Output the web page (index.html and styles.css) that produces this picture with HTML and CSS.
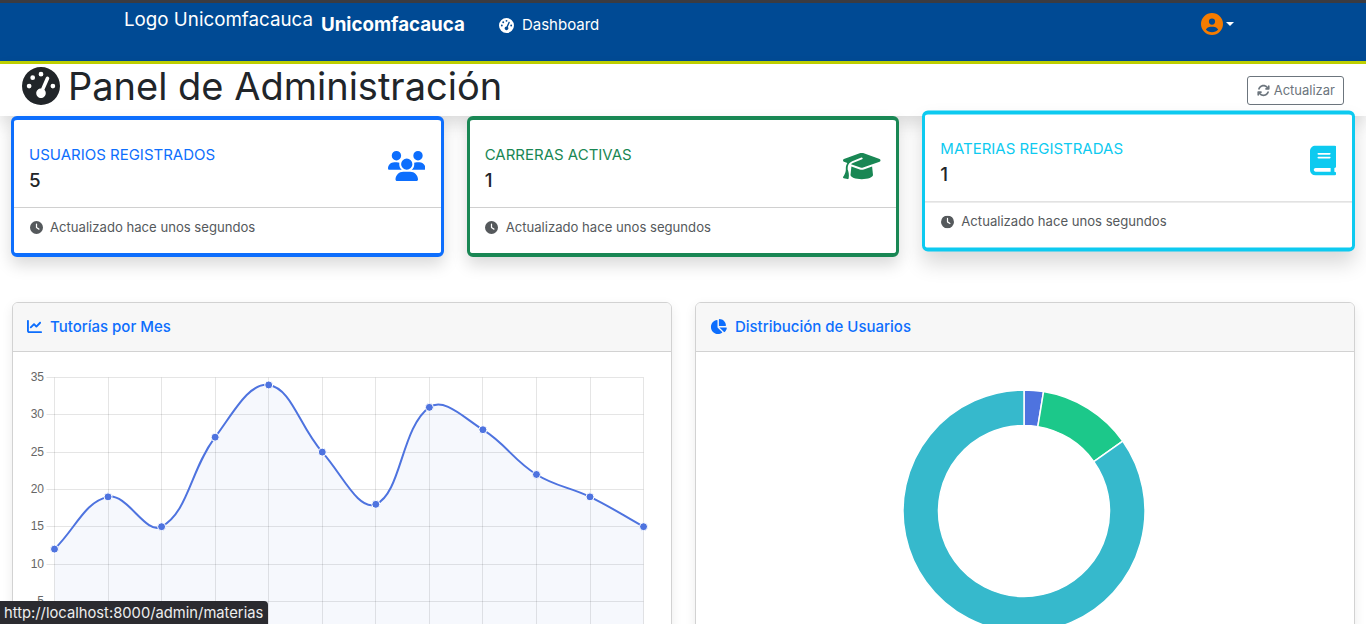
FILE: index.html
```html
<!DOCTYPE html>
<html lang="es">
<head>
    <meta charset="UTF-8">
    <meta name="viewport" content="width=device-width, initial-scale=1.0">
    <title>Panel de Administración</title>
    <link rel="stylesheet" href="styles.css">
</head>
<body>
    <svg class="icon-defs" aria-hidden="true">
        <symbol id="i-gauge" viewBox="0 0 512 512"><path d="M0 256a256 256 0 1 1 512 0A256 256 0 1 1 0 256zM288 96a32 32 0 1 0 -64 0 32 32 0 1 0 64 0zM256 416c35.3 0 64-28.7 64-64c0-17.4-6.9-33.1-18.1-44.6L366 161.7c5.3-12.1-.2-26.3-12.3-31.6s-26.3 .2-31.6 12.3L257.9 288c-.6 0-1.3 0-1.9 0c-35.3 0-64 28.7-64 64s28.7 64 64 64zM176 144a32 32 0 1 0 -64 0 32 32 0 1 0 64 0zM96 288a32 32 0 1 0 0-64 32 32 0 1 0 0 64zm352-32a32 32 0 1 0 -64 0 32 32 0 1 0 64 0z"/></symbol>
        <symbol id="i-clock" viewBox="0 0 512 512"><path d="M256 0a256 256 0 1 1 0 512A256 256 0 1 1 256 0zM232 120V256c0 8 4 15.5 10.7 20l96 64c11 7.4 25.9 4.4 33.3-6.7s4.4-25.9-6.7-33.3L280 243.2V120c0-13.3-10.7-24-24-24s-24 10.7-24 24z"/></symbol>
    </svg>

    <nav class="navbar">
        <span class="nav-logo">Logo Unicomfacauca</span>
        <a class="nav-brand" href="#">Unicomfacauca</a>
        <a class="nav-link" href="#">
            <svg class="nav-link-icon"><use href="#i-gauge"/></svg>
            Dashboard
        </a>
        <a class="nav-user" href="#">
            <svg class="nav-user-icon" viewBox="0 0 512 512"><path d="M399 384.2C376.9 345.8 335.4 320 288 320H224c-47.4 0-88.9 25.8-111 64.2c35.2 39.2 86.2 63.8 143 63.8s107.8-24.7 143-63.8zM0 256a256 256 0 1 1 512 0A256 256 0 1 1 0 256zm256 16a72 72 0 1 0 0-144 72 72 0 1 0 0 144z"/></svg>
            <span class="caret"></span>
        </a>
    </nav>

    <header class="page-header">
        <h1 class="page-title">
            <svg class="page-title-icon"><use href="#i-gauge"/></svg>
            Panel de Administración
        </h1>
        <button class="btn-refresh">
            <svg class="btn-refresh-icon" viewBox="0 0 512 512"><path d="M105.1 202.6c7.7-21.8 20.2-42.3 37.8-59.8c62.5-62.5 163.8-62.5 226.3 0L386.3 160H352c-17.7 0-32 14.3-32 32s14.3 32 32 32H463.5c0 0 0 0 0 0h.4c17.7 0 32-14.3 32-32V80c0-17.7-14.3-32-32-32s-32 14.3-32 32v35.2L414.4 97.6c-87.5-87.5-229.3-87.5-316.8 0C73.2 122 55.6 150.7 44.8 181.4c-5.9 16.7 2.9 34.9 19.5 40.8s34.9-2.9 40.8-19.5zM39 289.3c-5 1.5-9.8 4.2-13.7 8.2c-4 4-6.7 8.8-8.1 14c-.3 1.2-.6 2.5-.8 3.8c-.3 1.7-.4 3.4-.4 5.1V432c0 17.7 14.3 32 32 32s32-14.3 32-32V396.9l17.6 17.5 0 0c87.5 87.4 229.3 87.4 316.7 0c24.4-24.4 42.1-53.1 52.9-83.7c5.9-16.7-2.9-34.9-19.5-40.8s-34.9 2.9-40.8 19.5c-7.7 21.8-20.2 42.3-37.8 59.8c-62.5 62.5-163.8 62.5-226.3 0l-.1-.1L125.6 352H160c17.7 0 32-14.3 32-32s-14.3-32-32-32H48.4c-1.6 0-3.2 .1-4.8 .3s-3.1 .5-4.6 1z"/></svg>
            Actualizar
        </button>
    </header>

    <section class="stats">
        <div class="stat-card stat-blue">
            <div class="stat-body">
                <div>
                    <div class="stat-label">USUARIOS REGISTRADOS</div>
                    <div class="stat-value">5</div>
                </div>
                <svg class="stat-icon" viewBox="0 0 640 512"><path d="M144 0a80 80 0 1 1 0 160A80 80 0 1 1 144 0zM512 0a80 80 0 1 1 0 160A80 80 0 1 1 512 0zM0 298.7C0 239.8 47.8 192 106.7 192h42.7c15.9 0 31 3.5 44.6 9.7c-1.3 7.2-1.9 14.7-1.9 22.3c0 38.2 16.8 72.5 43.3 96c-.2 0-.4 0-.7 0H21.3C9.6 320 0 310.4 0 298.7zM405.3 320c-.2 0-.4 0-.7 0c26.6-23.5 43.3-57.8 43.3-96c0-7.6-.7-15-1.9-22.3c13.6-6.3 28.7-9.7 44.6-9.7h42.7C592.2 192 640 239.8 640 298.7c0 11.8-9.6 21.3-21.3 21.3H405.3zM224 224a96 96 0 1 1 192 0 96 96 0 1 1 -192 0zM128 485.3C128 411.7 187.7 352 261.3 352H378.7C452.3 352 512 411.7 512 485.3c0 14.7-11.9 26.7-26.7 26.7H154.7c-14.7 0-26.7-11.9-26.7-26.7z"/></svg>
            </div>
            <div class="stat-footer"><svg class="clock"><use href="#i-clock"/></svg>Actualizado hace unos segundos</div>
        </div>
        <div class="stat-card stat-green">
            <div class="stat-body">
                <div>
                    <div class="stat-label">CARRERAS ACTIVAS</div>
                    <div class="stat-value">1</div>
                </div>
                <svg class="stat-icon" viewBox="0 0 640 512"><path d="M320 32c-8.1 0-16.1 1.4-23.7 4.1L15.8 137.4C6.3 140.9 0 149.9 0 160s6.3 19.1 15.8 22.6l57.9 20.9C57.3 229.3 48 259.8 48 291.9v28.1c0 28.4-10.8 57.7-22.3 80.8c-6.5 13-13.9 25.8-22.5 37.6C0 442.7-.9 448.3 .9 453.4s6 8.9 11.2 10.2l64 16c4.2 1.1 8.7 .3 12.4-2s6.3-6.1 7.1-10.4c8.6-42.8 4.3-81.2-2.1-108.7C90.3 344.3 86 329.8 80 316.5V291.9c0-30.2 10.2-58.7 27.9-81.5c12.9-15.5 29.6-28 49.2-35.7l157-61.7c8.2-3.2 17.5 .8 20.7 9s-.8 17.5-9 20.7l-157 61.7c-12.4 4.9-23.3 12.4-32.2 21.6l159.6 57.6c7.6 2.7 15.6 4.1 23.7 4.1s16.1-1.4 23.7-4.1L624.2 182.6c9.5-3.4 15.8-12.5 15.8-22.6s-6.3-19.1-15.8-22.6L343.7 36.1C336.1 33.4 328.1 32 320 32zM128 408c0 35.3 86 72 192 72s192-36.7 192-72L496.7 262.6 354.5 314c-11.1 4-22.8 6-34.5 6s-23.5-2-34.5-6L143.3 262.6 128 408z"/></svg>
            </div>
            <div class="stat-footer"><svg class="clock"><use href="#i-clock"/></svg>Actualizado hace unos segundos</div>
        </div>
        <div class="stat-card stat-cyan stat-hover">
            <div class="stat-body">
                <div>
                    <div class="stat-label">MATERIAS REGISTRADAS</div>
                    <div class="stat-value">1</div>
                </div>
                <svg class="stat-icon" viewBox="0 0 448 512"><path d="M96 0C43 0 0 43 0 96V416c0 53 43 96 96 96H384h32c17.7 0 32-14.3 32-32s-14.3-32-32-32V384c17.7 0 32-14.3 32-32V32c0-17.7-14.3-32-32-32H384 96zm0 384H352v64H96c-17.7 0-32-14.3-32-32s14.3-32 32-32zm32-240c0-8.8 7.2-16 16-16H336c8.8 0 16 7.2 16 16s-7.2 16-16 16H144c-8.8 0-16-7.2-16-16zm16 48H336c8.8 0 16 7.2 16 16s-7.2 16-16 16H144c-8.8 0-16-7.2-16-16s7.2-16 16-16z"/></svg>
            </div>
            <div class="stat-footer"><svg class="clock"><use href="#i-clock"/></svg>Actualizado hace unos segundos</div>
        </div>
    </section>

    <section class="charts">
        <div class="panel">
            <div class="panel-header">
                <svg class="panel-icon" viewBox="0 0 512 512"><path d="M64 64c0-17.7-14.3-32-32-32S0 46.3 0 64V400c0 44.2 35.8 80 80 80H480c17.7 0 32-14.3 32-32s-14.3-32-32-32H80c-8.8 0-16-7.2-16-16V64zm406.6 86.6c12.5-12.5 12.5-32.8 0-45.3s-32.8-12.5-45.3 0L320 210.7l-57.4-57.4c-12.5-12.5-32.8-12.5-45.3 0l-112 112c-12.5 12.5-12.5 32.8 0 45.3s32.8 12.5 45.3 0L240 221.3l57.4 57.4c12.5 12.5 32.8 12.5 45.3 0l128-128z"/></svg>
                Tutorías por Mes
            </div>
            <svg id="line-chart" class="panel-chart" viewBox="13 352 658 320"></svg>
        </div>
        <div class="panel">
            <div class="panel-header">
                <svg class="panel-icon" viewBox="0 0 576 512"><path d="M304 240V16.6c0-9 7-16.6 16-16.6C443.7 0 544 100.3 544 224c0 9-7.6 16-16.6 16H304zM32 272C32 150.7 122.1 50.3 239 34.3c9.2-1.3 17 6.1 17 15.4V288L412.5 444.5c6.7 6.7 6.2 17.7-1.5 23.1C371.8 495.6 323.8 512 272 512C139.5 512 32 404.6 32 272zm526.4 16c9.3 0 16.6 7.8 15.4 17c-7.7 55.9-34.6 105.6-73.9 142.3c-6 5.6-15.4 5.2-21.2-.7L320 288H558.4z"/></svg>
                Distribución de Usuarios
            </div>
            <svg id="donut-chart" class="panel-chart" viewBox="696 352 658 320"></svg>
        </div>
    </section>

    <div class="status-bubble">http://localhost:8000/admin/materias</div>

    <script src="charts.js"></script>
</body>
</html>
```

FILE: styles.css
```css
html, body {
    height: 100%;
    overflow: hidden;
}
body {
    margin: 0;
    font-family: Inter, "Liberation Sans", sans-serif;
    color: #212529;
    background-color: #fff;
}
a {
    color: inherit;
    text-decoration: none;
}
.icon-defs {
    display: none;
}

.navbar {
    display: flex;
    align-items: flex-start;
    height: 58px;
    padding-left: 124px;
    background-color: #004a94;
    border-top: 3px solid #3b3b40;
    border-bottom: 3px solid #c1d300;
    color: #fff;
}
.nav-logo {
    margin-top: 5px;
    font-size: 18.75px;
    line-height: 24px;
}
.nav-brand {
    margin: 10px 34px 0 8px;
    font-size: 18.75px;
    font-weight: 700;
    line-height: 24px;
}
.nav-link {
    display: flex;
    align-items: center;
    margin-top: 10px;
    font-size: 15px;
    line-height: 24px;
}
.nav-link-icon {
    width: 15px;
    height: 15px;
    margin-right: 8px;
    fill: #fff;
}
.nav-user {
    display: flex;
    align-items: center;
    margin: 10px 0 0 auto;
    padding-right: 132px;
}
.nav-user-icon {
    width: 22px;
    height: 22px;
    fill: #f57c00;
}
.caret {
    margin-left: 3px;
    border-top: 4px solid #fff;
    border-left: 4px solid transparent;
    border-right: 4px solid transparent;
}

.page-header {
    display: flex;
    align-items: center;
    justify-content: space-between;
    height: 52px;
    padding: 0 22px;
    background-color: #fff;
    box-shadow: 0 8px 16px rgba(0, 0, 0, .15);
}
.page-title {
    display: flex;
    align-items: center;
    margin: 0 0 8px;
    font-size: 38px;
    font-weight: 400;
    line-height: 44px;
}
.page-title-icon {
    width: 38px;
    height: 38px;
    margin-right: 8px;
    fill: #212529;
}
.btn-refresh {
    display: flex;
    align-items: center;
    height: 29px;
    padding: 0 8px 0 8.5px;
    background: #fff;
    border: 1px solid #6c757d;
    border-radius: 3px;
    color: #6c757d;
    font-family: inherit;
    font-size: 13px;
}
.btn-refresh-icon {
    width: 13px;
    height: 13px;
    margin-right: 4px;
    fill: #6c757d;
}

.stats {
    position: relative;
    display: grid;
    grid-template-columns: repeat(3, 1fr);
    gap: 23px;
    padding: 0 11px;
}
.stat-card {
    height: 141px;
    box-sizing: border-box;
    background-color: #fff;
    border-width: 4px 3px;
    border-style: solid;
    border-radius: 6px;
    box-shadow: 0 8px 16px rgba(0, 0, 0, .15);
}
.stat-blue { border-color: #0d6efd; }
.stat-blue .stat-label, .stat-blue .stat-icon { color: #0d6efd; fill: #0d6efd; }
.stat-green { border-color: #198754; }
.stat-green .stat-label, .stat-green .stat-icon { color: #198754; fill: #198754; }
.stat-cyan { border-color: #0dcaf0; }
.stat-cyan .stat-label, .stat-cyan .stat-icon { color: #0dcaf0; fill: #0dcaf0; }
.stat-hover {
    transform: translateY(-5.6px);
    box-shadow: 0 12px 20px rgba(0, 0, 0, .15);
}
.stat-body {
    display: flex;
    align-items: center;
    justify-content: space-between;
    height: 87px;
    box-sizing: border-box;
    padding: 9px 15.5px 0 15px;
}
.stat-label {
    font-size: 15px;
    line-height: 21px;
}
.stat-value {
    margin-top: 4px;
    font-size: 18.75px;
    font-weight: 500;
    line-height: 24px;
}
.stat-icon {
    height: 30px;
    margin-bottom: 4px;
}
.stat-footer {
    display: flex;
    align-items: center;
    height: 46px;
    box-sizing: border-box;
    padding: 0 15px 7px 15.5px;
    border-top: 1px solid #d0d0d0;
    color: #55595c;
    font-size: 13.125px;
}
.clock {
    width: 13px;
    height: 13px;
    margin-right: 7.5px;
    fill: #55595c;
}

.charts {
    display: grid;
    grid-template-columns: repeat(2, 660px);
    gap: 23px;
    padding: 45px 11.5px 0;
}
.panel {
    background-color: #fff;
    border: 1px solid #d2d2d2;
    border-radius: 6px;
    box-shadow: 0 4px 12px rgba(0, 0, 0, .08);
    overflow: hidden;
}
.panel-header {
    display: flex;
    align-items: center;
    height: 49px;
    box-sizing: border-box;
    padding: 0 15px 2px 14.5px;
    background-color: #f7f7f7;
    border-bottom: 1px solid #d2d2d2;
    color: #0d6efd;
    font-size: 15px;
    font-weight: 500;
}
.panel-icon {
    height: 15px;
    margin-right: 8px;
    fill: #0d6efd;
}
.panel-chart {
    display: block;
    width: 658px;
    height: 320px;
}
.grid-line {
    stroke: rgba(0, 0, 0, .1);
    stroke-width: 1;
}
.tick-label {
    fill: #666;
    font-family: "Liberation Sans", sans-serif;
    font-size: 12px;
}
.line-area {
    fill: rgba(78, 115, 223, .05);
}
.line-path {
    fill: none;
    stroke: #4e73df;
    stroke-width: 2;
}
.line-point {
    fill: #4e73df;
    stroke: #fff;
    stroke-width: 1;
}
.donut-slice {
    stroke: #fff;
    stroke-width: 1.5;
}

.status-bubble {
    position: fixed;
    left: 0;
    bottom: 0;
    height: 23px;
    padding: 0 5px 0 4px;
    background-color: #2b2b30;
    border-top-right-radius: 4px;
    color: #eee;
    font-size: 14.75px;
    line-height: 24px;
}
```

FILE: charts.js
```js
const NS = 'http://www.w3.org/2000/svg';

function add(svg, tag, attrs, text) {
    const el = document.createElementNS(NS, tag);
    for (const key in attrs) {
        el.setAttribute(key, attrs[key]);
    }
    if (text !== undefined) {
        el.textContent = text;
    }
    svg.appendChild(el);
    return el;
}

// Tutorias por mes, same curve maths as a chart.js line with tension
function drawLine() {
    const svg = document.getElementById('line-chart');
    const data = [12, 19, 15, 27, 34, 25, 18, 31, 28, 22, 19, 15];
    const left = 54.5, step = 53.55, top = 377.5, unit = 7.46;
    const tension = 0.4;
    const bottom = top + 35 * unit;
    const pts = data.map((v, i) => ({ x: left + i * step, y: top + (35 - v) * unit }));

    for (let v = 0; v <= 35; v += 5) {
        const y = Math.round(top + (35 - v) * unit - 0.5) + 0.5;
        add(svg, 'line', { class: 'grid-line', x1: left - 8, x2: left + 11 * step, y1: y, y2: y });
        if (v > 0) {
            add(svg, 'text', { class: 'tick-label', x: 44, y: y + 3.5, 'text-anchor': 'end' }, v);
        }
    }
    pts.forEach((p) => {
        const x = Math.round(p.x - 0.5) + 0.5;
        add(svg, 'line', { class: 'grid-line', x1: x, x2: x, y1: top, y2: bottom + 8 });
    });

    const dist = (a, b) => Math.hypot(a.x - b.x, a.y - b.y);
    const ctrl = pts.map((p, i) => {
        const prev = pts[i - 1] || p, next = pts[i + 1] || p;
        const d1 = dist(prev, p), d2 = dist(p, next);
        const f1 = tension * d1 / (d1 + d2), f2 = tension * d2 / (d1 + d2);
        return {
            inX: p.x - f1 * (next.x - prev.x), inY: p.y - f1 * (next.y - prev.y),
            outX: p.x + f2 * (next.x - prev.x), outY: p.y + f2 * (next.y - prev.y)
        };
    });

    let d = `M${pts[0].x} ${pts[0].y}`;
    for (let i = 1; i < pts.length; i++) {
        d += `C${ctrl[i - 1].outX} ${ctrl[i - 1].outY} ${ctrl[i].inX} ${ctrl[i].inY} ${pts[i].x} ${pts[i].y}`;
    }
    add(svg, 'path', { class: 'line-area', d: `${d}L${pts[11].x} ${bottom}L${pts[0].x} ${bottom}Z` });
    add(svg, 'path', { class: 'line-path', d });
    pts.forEach((p) => add(svg, 'circle', { class: 'line-point', cx: p.x, cy: p.y, r: 4 }));
}

// Distribucion de usuarios, angles in degrees from the top, clockwise
function drawDonut() {
    const svg = document.getElementById('donut-chart');
    const cx = 1024, cy = 511, outer = 121, inner = 85.5;
    const slices = [
        { from: 0, to: 9.3, color: '#4e73df' },
        { from: 9.3, to: 54.7, color: '#1cc88a' },
        { from: 54.7, to: 360, color: '#36b9cc' }
    ];
    const point = (r, deg) => {
        const a = deg * Math.PI / 180;
        return `${cx + r * Math.sin(a)} ${cy - r * Math.cos(a)}`;
    };
    slices.forEach((s) => {
        const large = s.to - s.from > 180 ? 1 : 0;
        const d = `M${point(outer, s.from)}A${outer} ${outer} 0 ${large} 1 ${point(outer, s.to)}`
            + `L${point(inner, s.to)}A${inner} ${inner} 0 ${large} 0 ${point(inner, s.from)}Z`;
        add(svg, 'path', { class: 'donut-slice', d, fill: s.color });
    });
}

drawLine();
drawDonut();
```
